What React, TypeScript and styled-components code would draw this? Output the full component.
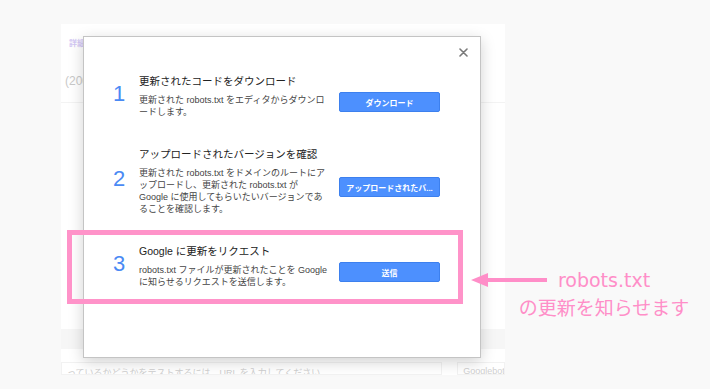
import styled, { createGlobalStyle } from 'styled-components';

const GlobalStyle = createGlobalStyle`
  body {
    margin: 0;
    background-color: #f9f9f9;
    font-family: 'Liberation Sans', 'Noto Sans CJK JP', sans-serif;
  }
`;

const StyledStage = styled.div`
  position: relative;
  width: 710px;
  height: 389px;
  overflow: hidden;
`;

// the dimmed search console page behind the dialog
const StyledSheet = styled.div`
  display: flex;
  flex-direction: column;
  width: 444px;
  height: 351px;
  margin: 24px 0 0 61px;
  background-color: #ffffff;
  overflow: hidden;
`;

const StyledTab = styled.div`
  padding: 13px 0 0 8px;
  height: 14px;
  font-size: 8px;
  font-weight: bold;
  color: #d3c8f3;
`;

const StyledHeading = styled.div`
  padding: 23px 0 0 4px;
  height: 28px;
  font-size: 12px;
  color: #c9c9c9;
  border-bottom: 1px solid #f3f3f3;
`;

const StyledFiller = styled.div`
  flex: 1;
`;

const StyledBand = styled.div`
  height: 20px;
  background-color: #f6f6f6;
`;

const StyledInputRow = styled.div`
  display: flex;
  gap: 15px;
  margin-top: 13px;
  height: 13px;
`;

const StyledInput = styled.div<{ $width: number }>`
  width: ${({ $width }) => $width}px;
  padding: 3px 5px 0;
  border: 1px solid #f2f2f2;
  font-size: 9px;
  color: #cfcfcf;
  white-space: nowrap;
  overflow: hidden;
`;

const StyledModal = styled.div`
  position: absolute;
  left: 83px;
  top: 36px;
  width: 398px;
  height: 322px;
  box-sizing: border-box;
  padding: 37px 0 0 25px;
  background-color: #ffffff;
  border: 1px solid #c4c4c4;
  box-shadow: 0 4px 14px rgba(0, 0, 0, 0.18);
`;

const StyledClose = styled.button`
  position: absolute;
  top: 11px;
  right: 12px;
  width: 9px;
  height: 9px;
  padding: 0;
  border: 0;
  background: none;
  display: flex;
`;

const StyledSteps = styled.div`
  display: flex;
  flex-direction: column;
  gap: 29px;
`;

const StyledStep = styled.div`
  display: grid;
  grid-template-columns: 20px 190px 101px;
  column-gap: 10px;
  align-items: center;
`;

const StyledNumber = styled.div`
  margin-bottom: 4px;
  font-size: 22px;
  line-height: 1;
  text-align: center;
  color: #4a8af4;
`;

const StyledTitle = styled.div`
  margin-bottom: 6px;
  font-size: 10.5px;
  line-height: 14px;
  color: #222222;
  white-space: nowrap;
`;

const StyledDescLine = styled.div`
  font-size: 9px;
  line-height: 12px;
  color: #444444;
  white-space: nowrap;
`;

const StyledButton = styled.button`
  height: 20px;
  margin-top: 12px;
  padding: 0 6px;
  box-sizing: border-box;
  border: 1px solid #3d80ee;
  border-radius: 2px;
  background-color: #4d90fe;
  color: #ffffff;
  font-family: inherit;
  font-size: 8px;
  font-weight: bold;
  white-space: nowrap;
  overflow: hidden;
`;

const StyledFrame = styled.div`
  position: absolute;
  left: 67px;
  top: 230px;
  width: 396px;
  height: 74px;
  box-sizing: border-box;
  border: 5px solid #ff93c9;
`;

const StyledArrow = styled.svg`
  position: absolute;
  left: 470px;
  top: 272px;
`;

const StyledCallout = styled.div`
  position: absolute;
  left: 504px;
  top: 266px;
  width: 200px;
  font-family: 'DejaVu Sans', 'Noto Sans CJK JP', sans-serif;
  font-size: 19px;
  line-height: 28px;
  text-align: center;
  color: #ff8ec8;
`;

const steps = [
  {
    id: 1,
    title: '更新されたコードをダウンロード',
    lines: ['更新された robots.txt をエディタからダウンロ', 'ードします。'],
    button: 'ダウンロード',
  },
  {
    id: 2,
    title: 'アップロードされたバージョンを確認',
    lines: [
      '更新された robots.txt をドメインのルートにア',
      'ップロードし、更新された robots.txt が',
      'Google に使用してもらいたいバージョンであ',
      'ることを確認します。',
    ],
    button: 'アップロードされたバ...',
  },
  {
    id: 3,
    title: 'Google に更新をリクエスト',
    lines: [
      'robots.txt ファイルが更新されたことを Google',
      'に知らせるリクエストを送信します。',
    ],
    button: '送信',
  },
];

const App = () => {
  return (
    <>
      <GlobalStyle />
      <StyledStage>
        <StyledSheet>
          <StyledTab>詳細</StyledTab>
          <StyledHeading>(2009</StyledHeading>
          <StyledFiller />
          <StyledBand />
          <StyledInputRow>
            <StyledInput $width={382}>
              っているかどうかをテストするには、URL を入力してください
            </StyledInput>
            <StyledInput $width={37}>Googlebot</StyledInput>
          </StyledInputRow>
        </StyledSheet>

        <StyledModal>
          <StyledClose aria-label="閉じる">
            <svg width="9" height="9" viewBox="0 0 9 9">
              <path
                d="M1 1L8 8M8 1L1 8"
                stroke="#7a7a7a"
                strokeWidth="1.6"
                strokeLinecap="round"
              />
            </svg>
          </StyledClose>
          <StyledSteps>
            {steps.map((step) => (
              <StyledStep key={step.id}>
                <StyledNumber>{step.id}</StyledNumber>
                <div>
                  <StyledTitle>{step.title}</StyledTitle>
                  {step.lines.map((line) => (
                    <StyledDescLine key={line}>{line}</StyledDescLine>
                  ))}
                </div>
                <StyledButton>{step.button}</StyledButton>
              </StyledStep>
            ))}
          </StyledSteps>
        </StyledModal>

        <StyledFrame />
        <StyledArrow width="80" height="16" viewBox="0 0 80 16">
          <path d="M1 8L18 1V6H77V10H18V15Z" fill="#ff8ec8" />
        </StyledArrow>
        <StyledCallout>
          robots.txt
          <br />
          の更新を知らせます
        </StyledCallout>
      </StyledStage>
    </>
  );
};

export default App;
